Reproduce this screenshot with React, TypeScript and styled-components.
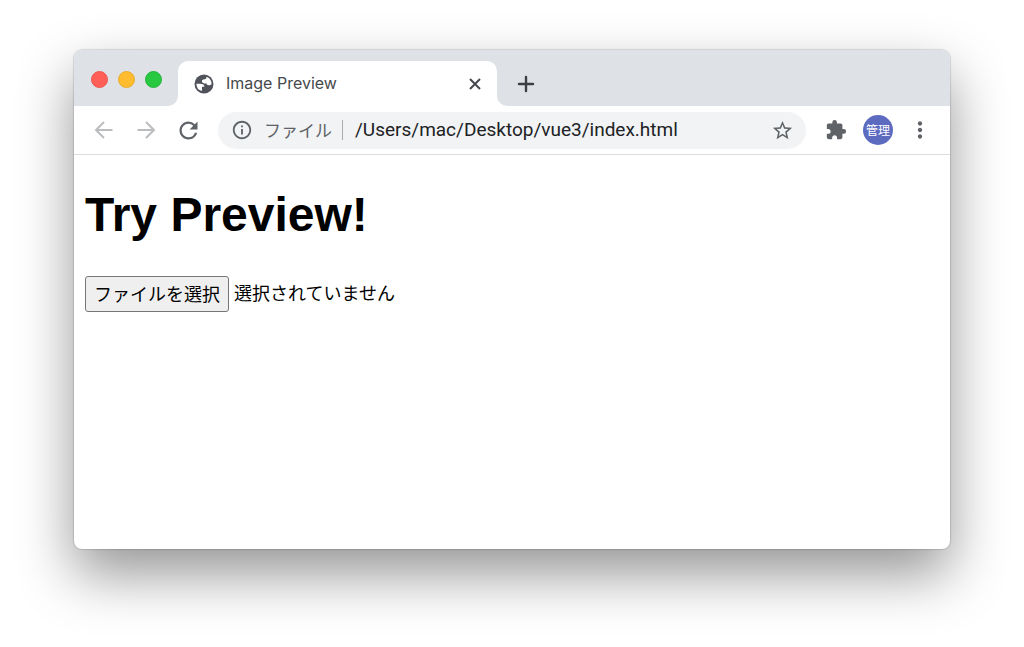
import React, { useRef, useState } from 'react';
import styled, { createGlobalStyle } from 'styled-components';
import { MdExtension, MdInfoOutline, MdMoreVert, MdRefresh, MdStarBorder } from 'react-icons/md';

const chrome = '#dee1e6';
const icon = '#5f6368';
const jp = '"Noto Sans CJK JP", sans-serif';

const GlobalStyle = createGlobalStyle`
  * { box-sizing: border-box; }
  body { margin: 0; background: #fff; }
  button, input { font: inherit; }
`;

const Desktop = styled.div`
  display: flex;
  min-height: 100vh;
  padding: 50px 74px 98px;
  overflow: hidden;
`;

const Window = styled.div`
  flex: 1;
  min-width: 0;
  display: flex;
  flex-direction: column;
  background: #fff;
  border-radius: 8px;
  overflow: hidden;
  box-shadow: 0 0 1px 1px rgba(0, 0, 0, 0.12), 0 25px 56px rgba(0, 0, 0, 0.42);
`;

const TabStrip = styled.header`
  display: flex;
  height: 56px;
  font-family: Inter, sans-serif;
`;

const WindowControls = styled.div`
  display: flex;
  gap: 10px;
  width: 104px;
  padding: 21px 0 0 17px;
  background: ${chrome};
  border-bottom-right-radius: 10px;
`;

const Light = styled.button<{ $color: string; $edge: string }>`
  width: 17px;
  height: 17px;
  padding: 0;
  border: 1px solid ${p => p.$edge};
  border-radius: 50%;
  background: ${p => p.$color};
`;

const TabSlot = styled.div`
  flex: 0 1 319px;
  min-width: 0;
  padding-top: 11px;
  background: linear-gradient(${chrome} 30px, #fff 30px);
`;

const Tab = styled.div`
  display: flex;
  align-items: center;
  height: 45px;
  padding: 0 12px 0 16px;
  background: #fff;
  border-radius: 10px 10px 0 0;
`;

const TabTitle = styled.span`
  flex: 1;
  margin-left: 12px;
  padding-bottom: 2px;
  font-size: 16px;
  line-height: 20px;
  color: #45494d;
  white-space: nowrap;
  overflow: hidden;
`;

const StripRest = styled.div`
  flex: 1;
  padding: 20px 0 0 15px;
  background: ${chrome};
  border-bottom-left-radius: 10px;
`;

const IconButton = styled.button<{ $size: number; $color?: string }>`
  flex: none;
  display: flex;
  align-items: center;
  justify-content: center;
  width: ${p => p.$size}px;
  height: ${p => p.$size}px;
  padding: 0;
  border: 0;
  background: none;
  color: ${p => p.$color ?? icon};
`;

const Toolbar = styled.div`
  display: flex;
  align-items: center;
  height: 49px;
  padding: 0 17px 0 16px;
  border-bottom: 1px solid #dadce0;
`;

const Navigation = styled.nav`
  display: flex;
  gap: 14px;
  margin-right: 16px;
`;

const AddressBar = styled.div`
  flex: 1;
  min-width: 0;
  display: flex;
  align-items: center;
  height: 37px;
  padding: 0 10px 0 13px;
  border-radius: 19px;
  background: #f1f3f4;
`;

const Scheme = styled.label`
  margin-left: 11px;
  padding-right: 10px;
  border-right: 1px solid #a8abaf;
  font-family: ${jp};
  font-size: 17px;
  line-height: 20px;
  color: ${icon};
  white-space: nowrap;
`;

const Url = styled.input`
  flex: 1;
  min-width: 0;
  padding: 0 0 0 12px;
  border: 0;
  outline: 0;
  background: none;
  font-family: Roboto, sans-serif;
  font-size: 19px;
  line-height: 24px;
  color: #202124;
`;

const Actions = styled.div`
  display: flex;
  align-items: center;
  gap: 14px;
  margin-left: 17px;
`;

const Avatar = styled.button`
  width: 30px;
  height: 30px;
  padding: 0;
  border: 0;
  border-radius: 50%;
  background: #5c6bc0;
  color: #fff;
  font-family: ${jp};
  font-size: 12px;
  line-height: 30px;
`;

const Page = styled.main`
  flex: 1;
  padding: 25px 11px;
  font-family: ${jp};
  color: #000;
`;

const Heading = styled.h1`
  margin: 0;
  font-family: "Liberation Sans", sans-serif;
  font-size: 48px;
  font-weight: 700;
  line-height: 70px;
`;

const FilePicker = styled.div`
  display: flex;
  gap: 5px;
  margin-top: 26px;
  font-size: 18px;
  line-height: 32px;
`;

const PickButton = styled.button`
  height: 36px;
  padding: 0 8px 4px;
  border: 1px solid #767676;
  border-radius: 3px;
  background: #efefef;
  color: #000;
`;

const GlobeIcon = () => (
  <svg width="20" height="20" viewBox="0 0 20 20" aria-hidden="true">
    <circle cx="10" cy="10" r="9.5" fill="#50545a" />
    <path
      fill="#fff"
      d="M2.4 9.7h3.6c2.9 0 4.5 .8 4.4 3.1H8v4.3A7.6 7.6 0 0 1 2.4 9.7ZM12.2 2.8a7.6 7.6 0 0 1 5.3 7.4c-.8.8-1.6 1.1-2.7 1.1-1.5 0-2.2-.5-2.3-1.7-2.4.1-4.6-.4-4.6-2.3 0-1.5 1.2-1.9 2.8-2 1.4-.1 2.1-1 1.5-2.5Z"
    />
  </svg>
);

const ArrowIcon = ({ forward = false }: { forward?: boolean }) => (
  <svg width="20" height="20" viewBox="0 0 20 20" fill="none" stroke="currentColor" strokeWidth="2" aria-hidden="true">
    <path d={forward ? 'M1.5 10h16M10 2l8 8-8 8' : 'M18.5 10h-16M10 2l-8 8 8 8'} />
  </svg>
);

const CloseIcon = () => (
  <svg width="12" height="12" viewBox="0 0 12 12" stroke="currentColor" strokeWidth="2" aria-hidden="true">
    <path d="m1 1 10 10M11 1 1 11" />
  </svg>
);

const PlusIcon = () => (
  <svg width="18" height="18" viewBox="0 0 18 18" stroke="currentColor" strokeWidth="2.4" strokeLinecap="round" aria-hidden="true">
    <path d="M9 2v14M2 9h14" />
  </svg>
);

export default function App() {
  const picker = useRef<HTMLInputElement>(null);
  const [fileName, setFileName] = useState('選択されていません');
  return (
    <>
      <GlobalStyle />
      <Desktop>
        <Window>
          <TabStrip>
            <WindowControls>
              <Light aria-label="Close" $color="#ff5f57" $edge="#ee554e" />
              <Light aria-label="Minimize" $color="#febc2e" $edge="#e9ad2b" />
              <Light aria-label="Zoom" $color="#28c840" $edge="#24b53a" />
            </WindowControls>
            <TabSlot>
              <Tab>
                <GlobeIcon />
                <TabTitle>Image Preview</TabTitle>
                <IconButton aria-label="Close tab" $size={20} $color="#45494d"><CloseIcon /></IconButton>
              </Tab>
            </TabSlot>
            <StripRest>
              <IconButton aria-label="New tab" $size={28} $color="#3c4043"><PlusIcon /></IconButton>
            </StripRest>
          </TabStrip>
          <Toolbar>
            <Navigation>
              <IconButton aria-label="Back" $size={28} $color="#babcbe"><ArrowIcon /></IconButton>
              <IconButton aria-label="Forward" $size={28} $color="#babcbe"><ArrowIcon forward /></IconButton>
              <IconButton aria-label="Reload" $size={28}><MdRefresh size={27} /></IconButton>
            </Navigation>
            <AddressBar>
              <MdInfoOutline size={22} color={icon} />
              <Scheme htmlFor="url">ファイル</Scheme>
              <Url id="url" defaultValue="/Users/mac/Desktop/vue3/index.html" spellCheck={false} />
              <IconButton aria-label="Bookmark" $size={28}><MdStarBorder size={23} /></IconButton>
            </AddressBar>
            <Actions>
              <IconButton aria-label="Extensions" $size={26}><MdExtension size={22} /></IconButton>
              <Avatar>管理</Avatar>
              <IconButton aria-label="Menu" $size={26}><MdMoreVert size={26} /></IconButton>
            </Actions>
          </Toolbar>
          <Page>
            <Heading>Try Preview!</Heading>
            <FilePicker>
              <PickButton onClick={() => picker.current?.click()}>ファイルを選択</PickButton>
              <input
                ref={picker}
                type="file"
                accept="image/*"
                aria-label="ファイルを選択"
                hidden
                onChange={e => setFileName(e.target.files?.[0]?.name ?? '選択されていません')}
              />
              <span>{fileName}</span>
            </FilePicker>
          </Page>
        </Window>
      </Desktop>
    </>
  );
}
